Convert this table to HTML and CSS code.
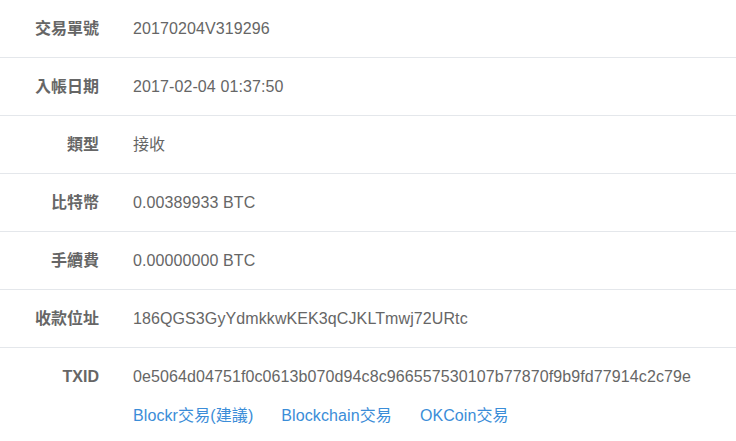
FILE: index.html
```html
<!DOCTYPE html>
<html lang="zh-Hant">
<head>
<meta charset="utf-8">
<title>交易明細</title>
<link rel="stylesheet" href="styles.css">
</head>
<body>
<div class="detail">
  <div class="row"><div class="label">交易單號</div><div class="value">20170204V319296</div></div>
  <div class="row"><div class="label">入帳日期</div><div class="value">2017-02-04 01:37:50</div></div>
  <div class="row"><div class="label">類型</div><div class="value">接收</div></div>
  <div class="row"><div class="label">比特幣</div><div class="value">0.00389933 BTC</div></div>
  <div class="row"><div class="label">手續費</div><div class="value">0.00000000 BTC</div></div>
  <div class="row"><div class="label">收款位址</div><div class="value">186QGS3GyYdmkkwKEK3qCJKLTmwj72URtc</div></div>
  <div class="row last"><div class="label">TXID</div>
    <div class="value">
      <div>0e5064d04751f0c0613b070d94c8c966557530107b77870f9b9fd77914c2c79e</div>
      <div class="links"><a href="#">Blockr交易(建議)</a><a href="#">Blockchain交易</a><a href="#">OKCoin交易</a></div>
    </div>
  </div>
</div>
</body>
</html>
```
FILE: styles.css
```css
html, body {
  margin: 0;
  padding: 0;
  background: #fff;
}
body {
  font-family: "Liberation Sans", "Noto Sans CJK TC", sans-serif;
  font-size: 16px;
  color: #666;
}
.row {
  display: flex;
  border-bottom: 1px solid #e4e7eb;
  padding: 18px 0;
  line-height: 21px;
}
.row.last {
  border-bottom: none;
}
.label {
  width: 99px;
  flex: none;
  text-align: right;
  font-weight: bold;
  color: #666;
}
.value {
  padding-left: 34px;
  color: #666;
  letter-spacing: 0.1px;
}
.links {
  margin-top: 18px;
  display: flex;
  gap: 28px;
}
.links a {
  color: #3b8dd8;
  text-decoration: none;
}
```
